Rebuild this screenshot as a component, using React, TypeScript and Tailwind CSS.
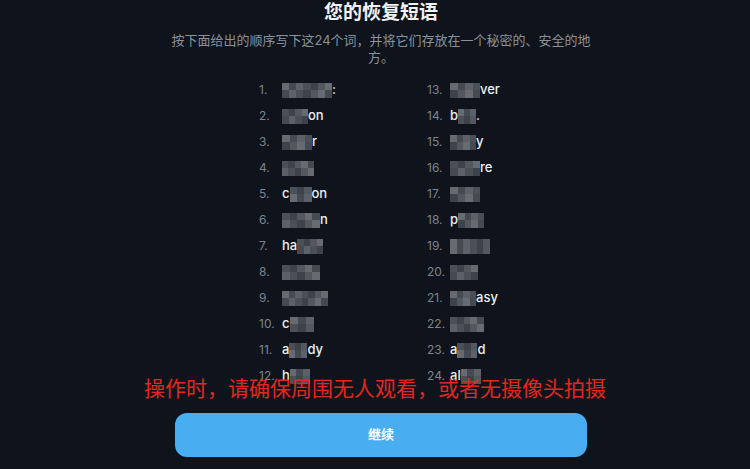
import React from "react";

type Part = string | number;

// Pixelated (mosaic) blocks hide parts of each word, like in the screenshot.
const SHADES = [
  "bg-[#4b5058]",
  "bg-[#5c6068]",
  "bg-[#3e434b]",
  "bg-[#666a71]",
  "bg-[#535760]",
  "bg-[#454a52]",
];

function Mosaic({ width, seed }: { width: number; seed: number }) {
  const cols = Math.max(2, Math.round(width / 7));
  const cells = Array.from({ length: cols * 2 });
  return (
    <span
      className="inline-grid h-[15px] align-middle"
      style={{ width, gridTemplateColumns: `repeat(${cols}, 1fr)` }}
    >
      {cells.map((_, i) => (
        <span key={i} className={SHADES[(i * 7 + seed * 3 + (i % 3)) % SHADES.length]} />
      ))}
    </span>
  );
}

const WORDS: Part[][] = [
  [50, ":"],
  [26, "on"],
  [30, "r"],
  [32],
  ["c", 22, "on"],
  [38, "n"],
  ["ha", 26],
  [38],
  [46],
  ["c", 24],
  ["a", 18, "dy"],
  ["h", 20],
  [30, "ver"],
  ["b", 18, "."],
  [26, "y"],
  [30, "re"],
  [30],
  ["p", 26],
  [40],
  [28],
  [26, "asy"],
  [34],
  ["a", 20, "d"],
  ["al", 20],
];

function Row({ n, parts }: { n: number; parts: Part[] }) {
  return (
    <div className="flex h-[26px] items-center">
      <span className="w-[23px] text-[12px] text-[#7c838d]">{n}.</span>
      <span className="flex items-center text-[13px] font-medium text-[#eceef1]">
        {parts.map((p, i) =>
          typeof p === "number" ? <Mosaic key={i} width={p} seed={n + i} /> : <span key={i}>{p}</span>
        )}
      </span>
    </div>
  );
}

export default function App() {
  const left = WORDS.slice(0, 12);
  const right = WORDS.slice(12);
  return (
    <main
      className="relative h-[469px] w-[750px] overflow-hidden bg-[#0f141c]"
      style={{ fontFamily: '"Inter", "Noto Sans CJK SC", sans-serif' }}
    >
      <div className="pl-[12px]">
        <div className="flex flex-col items-center">
          <h1 className="mt-[1px] text-[19px] font-bold leading-[24px] text-[#f1f2f4]">您的恢复短语</h1>
          <p className="mt-[7px] w-[420px] text-center text-[13px] leading-[17px] text-[#8a919b]">
            按下面给出的顺序写下这24个词，并将它们存放在一个秘密的、安全的地方。
          </p>
        </div>

        <div className="mt-[11px] grid grid-cols-[168px_168px] pl-[247px]">
          <div className="flex flex-col">
            {left.map((w, i) => (
              <Row key={i} n={i + 1} parts={w} />
            ))}
          </div>
          <div className="flex flex-col">
            {right.map((w, i) => (
              <Row key={i} n={i + 13} parts={w} />
            ))}
          </div>
        </div>

        <div className="mt-[24px] flex justify-center">
          <button
            type="button"
            className="h-[44px] w-[412px] rounded-[12px] bg-[#48adf1] text-[13px] font-bold text-white"
          >
            继续
          </button>
        </div>
      </div>

      {/* warning overlay */}
      <div className="absolute left-0 right-0 top-[375px] text-center text-[21px] leading-[28px] text-[#e5251f]">
        操作时，请确保周围无人观看，或者无摄像头拍摄
      </div>
    </main>
  );
}
